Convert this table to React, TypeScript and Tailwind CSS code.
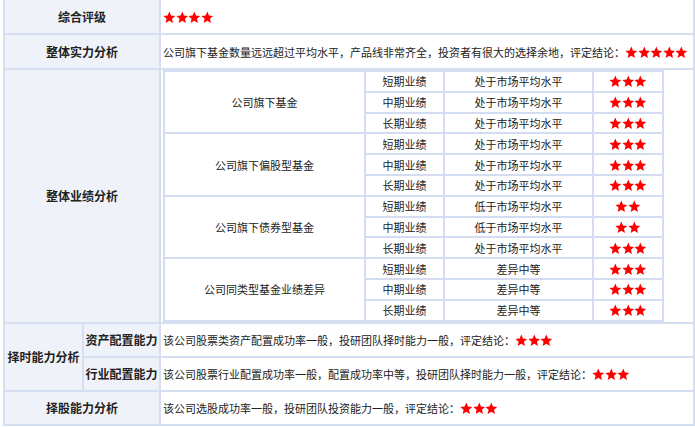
import React from "react";

const Star = () => (
  <svg viewBox="0 0 24 24" className="block h-[13px] w-[12.6px]">
    <path
      d="M12 0.8l3.2 7.5 8.1.7-6.2 5.4 1.9 8L12 18.2l-7 4.2 1.9-8L.7 9l8.1-.7z"
      fill="#ff0000"
    />
  </svg>
);

const Stars = ({ n }: { n: number }) => (
  <span className="inline-flex align-[-2px]">
    {Array.from({ length: n }).map((_, i) => (
      <Star key={i} />
    ))}
  </span>
);

const groups = [
  {
    name: "公司旗下基金",
    rows: [
      ["短期业绩", "处于市场平均水平", 3],
      ["中期业绩", "处于市场平均水平", 3],
      ["长期业绩", "处于市场平均水平", 3],
    ],
  },
  {
    name: "公司旗下偏股型基金",
    rows: [
      ["短期业绩", "处于市场平均水平", 3],
      ["中期业绩", "处于市场平均水平", 3],
      ["长期业绩", "处于市场平均水平", 3],
    ],
  },
  {
    name: "公司旗下债券型基金",
    rows: [
      ["短期业绩", "低于市场平均水平", 2],
      ["中期业绩", "低于市场平均水平", 2],
      ["长期业绩", "处于市场平均水平", 3],
    ],
  },
  {
    name: "公司同类型基金业绩差异",
    rows: [
      ["短期业绩", "差异中等", 3],
      ["中期业绩", "差异中等", 3],
      ["长期业绩", "差异中等", 3],
    ],
  },
] as const;

const label = "border-2 border-[#d6dff1] bg-[#eff2f8] text-center text-[12px] font-bold text-[#222]";
const cell = "border-2 border-[#d6dff1] bg-white px-[2px] text-left whitespace-nowrap";
const inner = "border-2 border-[#d3dcf0] h-[20.8px] p-0 text-center";

export default function App() {
  return (
    <div
      className="bg-white text-[11px] leading-[14px] text-[#222]"
      style={{ fontFamily: '"Noto Sans CJK SC", "Liberation Sans", sans-serif' }}
    >
      <table className="ml-[3px] mt-[-2px] w-[690px] table-fixed border-collapse">
        <colgroup>
          <col className="w-[79px]" />
          <col className="w-[77px]" />
          <col className="w-[534px]" />
        </colgroup>
        <tbody>
          <tr className="h-[35px]">
            <td colSpan={2} className={label}>综合评级</td>
            <td className={cell}>
              <Stars n={4} />
            </td>
          </tr>
          <tr className="h-[35px]">
            <td colSpan={2} className={label}>整体实力分析</td>
            <td className={cell}>
              公司旗下基金数量远远超过平均水平，产品线非常齐全，投资者有很大的选择余地，评定结论：
              <Stars n={5} />
            </td>
          </tr>
          <tr>
            <td colSpan={2} className={label}>整体业绩分析</td>
            <td className={`${cell} py-0`}>
              <table className="w-[499px] table-fixed border-collapse">
                <colgroup>
                  <col className="w-[201px]" />
                  <col className="w-[79px]" />
                  <col className="w-[149px]" />
                  <col className="w-[70px]" />
                </colgroup>
                <tbody>
                  {groups.map((g) =>
                    g.rows.map((r, i) => (
                      <tr key={g.name + i}>
                        {i === 0 && (
                          <td rowSpan={3} className={inner}>
                            {g.name}
                          </td>
                        )}
                        <td className={inner}>{r[0]}</td>
                        <td className={inner}>{r[1]}</td>
                        <td className={inner}>
                          <Stars n={r[2]} />
                        </td>
                      </tr>
                    ))
                  )}
                </tbody>
              </table>
            </td>
          </tr>
          <tr className="h-[34px]">
            <td rowSpan={2} className={label}>择时能力分析</td>
            <td className={label}>资产配置能力</td>
            <td className={cell}>
              该公司股票类资产配置成功率一般，投研团队择时能力一般，评定结论：
              <Stars n={3} />
            </td>
          </tr>
          <tr className="h-[34px]">
            <td className={label}>行业配置能力</td>
            <td className={cell}>
              该公司股票行业配置成功率一般，配置成功率中等，投研团队择时能力一般，评定结论：
              <Stars n={3} />
            </td>
          </tr>
          <tr className="h-[34px]">
            <td colSpan={2} className={label}>择股能力分析</td>
            <td className={cell}>
              该公司选股成功率一般，投研团队投资能力一般，评定结论：
              <Stars n={3} />
            </td>
          </tr>
        </tbody>
      </table>
    </div>
  );
}
